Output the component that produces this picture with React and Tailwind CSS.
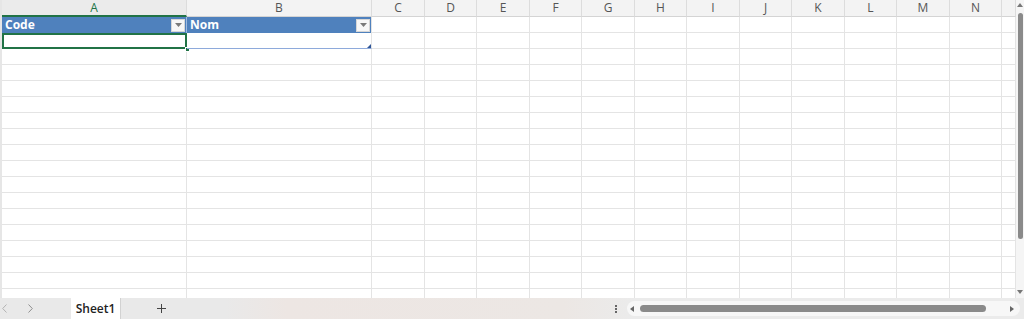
import React from "react";

const cols = [
  { key: "A", w: "w-[185px]" },
  { key: "B", w: "w-[185px]" },
  { key: "C", w: "w-[53px]" },
  { key: "D", w: "w-[52px]" },
  { key: "E", w: "w-[53px]" },
  { key: "F", w: "w-[52px]" },
  { key: "G", w: "w-[53px]" },
  { key: "H", w: "w-[52px]" },
  { key: "I", w: "w-[53px]" },
  { key: "J", w: "w-[52px]" },
  { key: "K", w: "w-[53px]" },
  { key: "L", w: "w-[52px]" },
  { key: "M", w: "w-[53px]" },
  { key: "N", w: "w-[52px]" },
  { key: "", w: "w-[14px]" },
];

const rowCount = 16;

function FilterButton() {
  return (
    <div className="ml-auto mr-[1px] flex h-[13px] w-[14px] items-center justify-center border border-[#d6d6d6] bg-[#f7f7f7]">
      <svg width="7" height="4" viewBox="0 0 7 4">
        <path d="M0 0h7L3.5 4z" fill="#7a7a7a" />
      </svg>
    </div>
  );
}

function ColumnHeaders() {
  return (
    <div className="flex h-[17px] shrink-0 bg-[#f3f3f3]">
      {cols.map((c) => (
        <div
          key={c.key || "pad"}
          className={`${c.w} shrink-0 flex items-center justify-center border-r border-[#dcdcdc] text-[12px] ${
            c.key === "A"
              ? "border-b-2 border-b-[#217346] bg-[#ebebeb] text-[#217346]"
              : "border-b border-b-[#d4d4d4] text-[#555]"
          }`}
        >
          {c.key}
        </div>
      ))}
    </div>
  );
}

function TableHeaderRow() {
  return (
    <div className="flex h-[16px] shrink-0">
      <div className="w-[185px] shrink-0 flex items-center bg-[#4f81bd] pl-[3px] text-[12px] font-bold text-white border-r border-[#9fbbe0]">
        Code
        <FilterButton />
      </div>
      <div className="w-[185px] shrink-0 flex items-center bg-[#4f81bd] pl-[3px] text-[12px] font-bold text-white border-r border-[#e2e2e2]">
        Nom
        <FilterButton />
      </div>
      {cols.slice(2).map((c) => (
        <div key={c.key || "pad"} className={`${c.w} shrink-0 border-r border-b border-[#e4e4e4]`} />
      ))}
    </div>
  );
}

function FirstDataRow() {
  return (
    <div className="flex h-[16px] shrink-0">
      <div className="relative w-[185px] shrink-0">
        <div className="absolute inset-0 border-2 border-[#217346]" />
        <div className="absolute -bottom-[3px] -right-[3px] h-[5px] w-[5px] border border-white bg-[#217346]" />
      </div>
      <div className="relative w-[185px] shrink-0 border-b border-[#8eaadb] border-r border-r-[#e4e4e4]">
        <svg className="absolute bottom-0 right-0" width="4" height="4" viewBox="0 0 4 4">
          <path d="M4 0v4H0z" fill="#2f5597" />
        </svg>
      </div>
      {cols.slice(2).map((c) => (
        <div key={c.key || "pad"} className={`${c.w} shrink-0 border-r border-b border-[#e4e4e4]`} />
      ))}
    </div>
  );
}

function EmptyRow() {
  return (
    <div className="flex h-[16px] shrink-0">
      {cols.map((c) => (
        <div key={c.key || "pad"} className={`${c.w} shrink-0 border-r border-b border-[#e4e4e4]`} />
      ))}
    </div>
  );
}

function VerticalScroll() {
  return (
    <div className="flex w-[8px] shrink-0 flex-col items-center bg-[#f5f5f5]">
      <svg className="mt-[3px]" width="6" height="4" viewBox="0 0 6 4">
        <path d="M3 0l3 4H0z" fill="#777" />
      </svg>
      <div className="mt-[6px] h-[226px] w-[5px] rounded-full bg-[#8a8a8a]" />
      <div className="flex-1" />
      <svg className="mb-[4px]" width="6" height="4" viewBox="0 0 6 4">
        <path d="M0 0h6L3 4z" fill="#777" />
      </svg>
    </div>
  );
}

function TabBar() {
  return (
    <div className="flex h-[21px] shrink-0 items-center bg-[linear-gradient(90deg,#e9e9e9_0%,#e9e9e9_22%,#ede6e3_28%,#ece7e4_55%,#ebebeb_62%,#ebebeb_100%)] text-[12px]">
      <svg className="ml-[2px]" width="5" height="9" viewBox="0 0 5 9">
        <path d="M4.5 0.5L0.7 4.5l3.8 4" fill="none" stroke="#b3b3b3" strokeWidth="1" />
      </svg>
      <svg className="ml-[21px]" width="5" height="9" viewBox="0 0 5 9">
        <path d="M0.5 0.5l3.8 4-3.8 4" fill="none" stroke="#8f8f8f" strokeWidth="1" />
      </svg>
      <div className="ml-[38px] flex h-full w-[49px] items-center justify-center bg-white font-semibold text-[#222]">
        Sheet1
      </div>
      <div className="h-full w-px bg-[#d2d2d2]" />
      <svg className="ml-[36px]" width="9" height="9" viewBox="0 0 9 9">
        <path d="M4.5 0v9M0 4.5h9" stroke="#444" strokeWidth="1" />
      </svg>
      <div className="flex-1" />
      <span className="mr-[10px] flex flex-col gap-[1px]">
        <span className="h-[2px] w-[2px] bg-[#666]" />
        <span className="h-[2px] w-[2px] bg-[#666]" />
        <span className="h-[2px] w-[2px] bg-[#666]" />
      </span>
      <div className="mr-[4px] flex h-[15px] w-[393px] items-center rounded-full bg-[#f7f7f7] px-[3px]">
        <svg width="4" height="6" viewBox="0 0 4 6">
          <path d="M0 3l4-3v6z" fill="#666" />
        </svg>
        <div className="ml-[6px] h-[7px] w-[346px] rounded-full bg-[#8a8a8a]" />
        <div className="flex-1" />
        <svg className="mr-[3px]" width="4" height="6" viewBox="0 0 4 6">
          <path d="M4 3L0 0v6z" fill="#666" />
        </svg>
      </div>
    </div>
  );
}

export default function App() {
  return (
    <div
      className="flex h-[319px] w-[1024px] flex-col overflow-hidden bg-white"
      style={{ fontFamily: '"Open Sans", "Liberation Sans", sans-serif' }}
    >
      <div className="flex min-h-0 flex-1">
        <div className="w-[2px] shrink-0 bg-[#e6e6e6]" />
        <div className="flex min-w-0 flex-1 flex-col overflow-hidden">
          <ColumnHeaders />
          <TableHeaderRow />
          <FirstDataRow />
          {Array.from({ length: rowCount }).map((_, i) => (
            <EmptyRow key={i} />
          ))}
        </div>
        <VerticalScroll />
      </div>
      <TabBar />
    </div>
  );
}
